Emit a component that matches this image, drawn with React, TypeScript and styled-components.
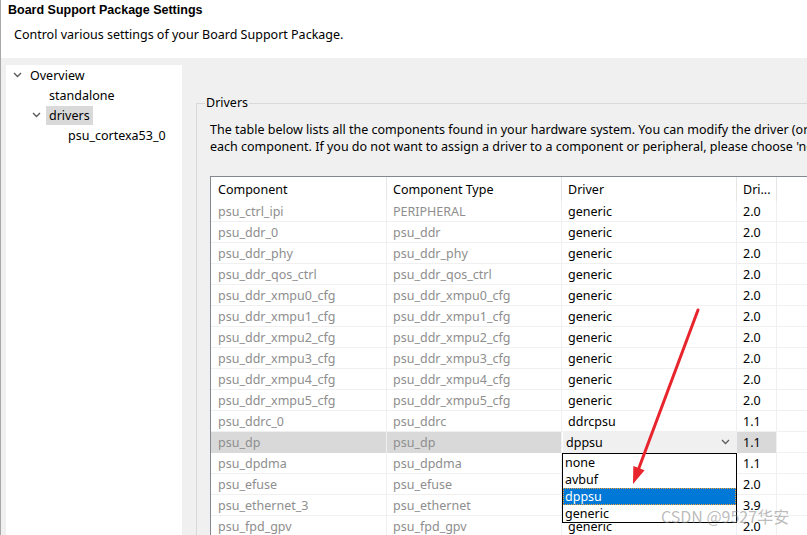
import React from "react";
import styled, { createGlobalStyle } from "styled-components";

const GlobalStyle = createGlobalStyle`
  html, body {
    margin: 0;
    padding: 0;
  }
  body {
    width: 807px;
    height: 535px;
    overflow: hidden;
    background: #f0f0f0;
    font-family: "Noto Sans", "Liberation Sans", Arial, sans-serif;
    font-size: 12.5px;
    color: #000;
  }
`;

const Frame = styled.div`
  position: relative;
  width: 807px;
  height: 535px;
  overflow: hidden;
  box-sizing: border-box;
  border-left: 1px solid #a8a8a8;
  display: flex;
  flex-direction: column;
`;

const Header = styled.div`
  flex: none;
  height: 58px;
  box-sizing: border-box;
  background: #fff;
  padding: 2px 0 0 7px;
`;

const Title = styled.div`
  font-family: "Liberation Sans", Arial, sans-serif;
  font-weight: bold;
  font-size: 12.5px;
  line-height: 16px;
`;

const Subtitle = styled.div`
  margin-top: 9px;
  padding-left: 6px;
  line-height: 16px;
`;

const Body = styled.div`
  flex: 1;
  display: flex;
  padding: 7px 0 0 5px;
  min-height: 0;
`;

const Sidebar = styled.div`
  flex: none;
  width: 176px;
  background: #fff;
`;

const TreeItem = styled.div<{ level: number }>`
  display: flex;
  align-items: center;
  height: 20px;
  padding-left: ${(p) => 7 + p.level * 19}px;
`;

const Twisty = styled.span`
  width: 14px;
  flex: none;
  display: flex;
  align-items: center;
`;

const TreeLabel = styled.span<{ selected?: boolean }>`
  padding: 0 3px;
  line-height: 19px;
  background: ${(p) => (p.selected ? "#d9d9d9" : "transparent")};
`;

const Main = styled.div`
  flex: 1;
  min-width: 0;
  padding: 38px 0 0 14px;
`;

const GroupBox = styled.div`
  width: 760px;
  height: 100%;
  box-sizing: border-box;
  border-top: 1px solid #d9d9d9;
  border-left: 1px solid #d9d9d9;
  padding-left: 13px;
`;

const Legend = styled.div`
  width: fit-content;
  margin: -8px 0 0 -5px;
  padding: 0 1px;
  line-height: 14px;
  background: #f0f0f0;
`;

const Description = styled.div`
  margin-top: 11px;
  line-height: 17px;
  white-space: nowrap;
`;

const Table = styled.div`
  margin-top: 21px;
  width: 627px;
  background: #fff;
  border-top: 1px solid #828790;
  border-left: 1px solid #828790;
`;

const cols = "176px 175px 175px 40px 60px";

const HeaderRow = styled.div`
  display: grid;
  grid-template-columns: ${cols};
  height: 24px;
`;

const HeaderCell = styled.div<{ pad?: number }>`
  border-right: 1px solid #e5e5e5;
  padding-left: ${(p) => p.pad ?? 6}px;
  line-height: 25px;
  white-space: nowrap;
  overflow: hidden;
`;

const Row = styled.div`
  display: grid;
  grid-template-columns: ${cols};
  height: 21px;
  box-sizing: border-box;
  border-bottom: 1px solid #f0f0f0;
`;

const Cell = styled.div<{ pad?: number; muted?: boolean; active?: boolean }>`
  position: relative;
  border-right: 1px solid #eef0f4;
  padding-left: ${(p) => p.pad ?? 6}px;
  line-height: 21px;
  white-space: nowrap;
  color: ${(p) => (p.muted ? "#8e8e8e" : "#000")};
  background: ${(p) => (p.active ? "#d9d9d9" : "transparent")};
`;

const Combo = styled.div`
  display: flex;
  align-items: center;
  justify-content: space-between;
  height: 20px;
  margin-left: -5px;
  padding: 0 6px 0 3px;
  background: #f0f0f0;
`;

const DropList = styled.div`
  position: absolute;
  z-index: 2;
  top: 21px;
  left: 0;
  width: 175px;
  box-sizing: border-box;
  border: 1px solid #000;
  background: #fff;
`;

const DropItem = styled.div<{ selected?: boolean }>`
  height: 17px;
  line-height: 17px;
  padding-left: 2px;
  background: ${(p) => (p.selected ? "#0078d7" : "transparent")};
  color: ${(p) => (p.selected ? "#fff" : "#000")};
  outline: ${(p) => (p.selected ? "1px dotted #f0a030" : "none")};
  outline-offset: -1px;
`;

const Overlay = styled.svg`
  position: absolute;
  z-index: 5;
  left: 0;
  top: 0;
  pointer-events: none;
`;

const Watermark = styled.div`
  position: absolute;
  z-index: 6;
  left: 660px;
  top: 506px;
  font-family: "Noto Sans CJK SC", "Liberation Sans", sans-serif;
  font-size: 16px;
  line-height: 20px;
  color: rgba(130, 130, 130, 0.55);
  white-space: nowrap;
`;

const Chevron = ({ color = "#5a5a5a" }: { color?: string }) => (
  <svg width="9" height="6" viewBox="0 0 9 6">
    <polyline points="1,1 4.5,4.5 8,1" fill="none" stroke={color} strokeWidth="1.4" />
  </svg>
);

type Comp = { name: string; type: string; driver: string; ver: string };

// driver cells hidden by the open list are left blank
const rows: Comp[] = [
  { name: "psu_ctrl_ipi", type: "PERIPHERAL", driver: "generic", ver: "2.0" },
  { name: "psu_ddr_0", type: "psu_ddr", driver: "generic", ver: "2.0" },
  { name: "psu_ddr_phy", type: "psu_ddr_phy", driver: "generic", ver: "2.0" },
  { name: "psu_ddr_qos_ctrl", type: "psu_ddr_qos_ctrl", driver: "generic", ver: "2.0" },
  { name: "psu_ddr_xmpu0_cfg", type: "psu_ddr_xmpu0_cfg", driver: "generic", ver: "2.0" },
  { name: "psu_ddr_xmpu1_cfg", type: "psu_ddr_xmpu1_cfg", driver: "generic", ver: "2.0" },
  { name: "psu_ddr_xmpu2_cfg", type: "psu_ddr_xmpu2_cfg", driver: "generic", ver: "2.0" },
  { name: "psu_ddr_xmpu3_cfg", type: "psu_ddr_xmpu3_cfg", driver: "generic", ver: "2.0" },
  { name: "psu_ddr_xmpu4_cfg", type: "psu_ddr_xmpu4_cfg", driver: "generic", ver: "2.0" },
  { name: "psu_ddr_xmpu5_cfg", type: "psu_ddr_xmpu5_cfg", driver: "generic", ver: "2.0" },
  { name: "psu_ddrc_0", type: "psu_ddrc", driver: "ddrcpsu", ver: "1.1" },
  { name: "psu_dp", type: "psu_dp", driver: "dppsu", ver: "1.1" },
  { name: "psu_dpdma", type: "psu_dpdma", driver: "", ver: "1.1" },
  { name: "psu_efuse", type: "psu_efuse", driver: "", ver: "2.0" },
  { name: "psu_ethernet_3", type: "psu_ethernet", driver: "", ver: "3.9" },
  { name: "psu_fpd_gpv", type: "psu_fpd_gpv", driver: "generic", ver: "2.0" },
];

const options = ["none", "avbuf", "dppsu", "generic"];

// arrow geometry, page coordinates
const tail = { x: 697, y: 310 };
const tip = { x: 632, y: 484 };
const dx = tip.x - tail.x;
const dy = tip.y - tail.y;
const len = Math.hypot(dx, dy);
const ux = dx / len;
const uy = dy / len;
const base = { x: tip.x - 17 * ux, y: tip.y - 17 * uy };
const head = [
  [tip.x, tip.y],
  [base.x + 6 * -uy, base.y + 6 * ux],
  [base.x - 6 * -uy, base.y - 6 * ux],
]
  .map((p) => p.join(","))
  .join(" ");

const App = () => {
  return (
    <Frame>
      <GlobalStyle />
      <Header>
        <Title>Board Support Package Settings</Title>
        <Subtitle>Control various settings of your Board Support Package.</Subtitle>
      </Header>
      <Body>
        <Sidebar>
          <TreeItem level={0}>
            <Twisty>
              <Chevron />
            </Twisty>
            <TreeLabel>Overview</TreeLabel>
          </TreeItem>
          <TreeItem level={1}>
            <Twisty />
            <TreeLabel>standalone</TreeLabel>
          </TreeItem>
          <TreeItem level={1}>
            <Twisty>
              <Chevron />
            </Twisty>
            <TreeLabel selected>drivers</TreeLabel>
          </TreeItem>
          <TreeItem level={2}>
            <Twisty />
            <TreeLabel>psu_cortexa53_0</TreeLabel>
          </TreeItem>
        </Sidebar>
        <Main>
          <GroupBox>
            <Legend>Drivers</Legend>
            <Description>
              The table below lists all the components found in your hardware system. You can modify the driver (or
              <br />
              each component. If you do not want to assign a driver to a component or peripheral, please choose 'none'.
            </Description>
            <Table>
              <HeaderRow>
                <HeaderCell pad={7}>Component</HeaderCell>
                <HeaderCell>Component Type</HeaderCell>
                <HeaderCell>Driver</HeaderCell>
                <HeaderCell>Dri...</HeaderCell>
                <HeaderCell />
              </HeaderRow>
              {rows.map((r) => {
                const active = r.name === "psu_dp";
                return (
                  <Row key={r.name}>
                    <Cell pad={7} muted active={active}>
                      {r.name}
                    </Cell>
                    <Cell muted active={active}>
                      {r.type}
                    </Cell>
                    <Cell>
                      {active ? (
                        <>
                          <Combo>
                            <span>{r.driver}</span>
                            <Chevron color="#606060" />
                          </Combo>
                          <DropList>
                            {options.map((o) => (
                              <DropItem key={o} selected={o === r.driver}>
                                {o}
                              </DropItem>
                            ))}
                          </DropList>
                        </>
                      ) : (
                        r.driver
                      )}
                    </Cell>
                    <Cell active={active}>{r.ver}</Cell>
                    <Cell />
                  </Row>
                );
              })}
            </Table>
          </GroupBox>
        </Main>
      </Body>
      <Overlay width="807" height="535" viewBox="0 0 807 535">
        <line
          x1={tail.x}
          y1={tail.y}
          x2={base.x}
          y2={base.y}
          stroke="#e8242c"
          strokeWidth="3"
          strokeLinecap="round"
        />
        <polygon points={head} fill="#e8242c" />
      </Overlay>
      <Watermark>CSDN @9527华安</Watermark>
    </Frame>
  );
};

export default App;
